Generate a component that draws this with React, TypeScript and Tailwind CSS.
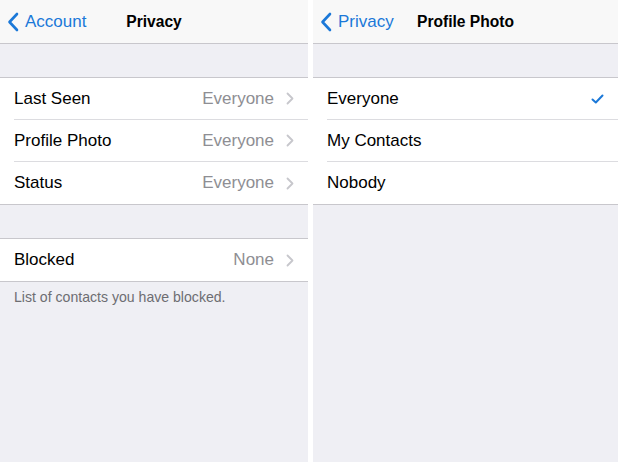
import { ReactNode } from "react";

const BackChevron = () => (
  <svg width="12" height="20" viewBox="0 0 12 20" className="shrink-0">
    <path d="M10 2 L2.5 10 L10 18" fill="none" stroke="#1b78d8" strokeWidth="2.6" strokeLinecap="round" strokeLinejoin="round" />
  </svg>
);

const RowChevron = () => (
  <svg width="8" height="13" viewBox="0 0 8 13" className="shrink-0">
    <path d="M1.5 1.5 L6.5 6.5 L1.5 11.5" fill="none" stroke="#c7c7cc" strokeWidth="1.8" strokeLinecap="round" strokeLinejoin="round" />
  </svg>
);

const Check = () => (
  <svg width="13" height="10" viewBox="0 0 13 10">
    <path d="M1.5 5.5 L4.8 8.5 L11.5 1.5" fill="none" stroke="#1b78d8" strokeWidth="2" strokeLinecap="round" strokeLinejoin="round" />
  </svg>
);

function NavBar({ back, title }: { back: string; title: string }) {
  return (
    <div className="relative h-[44px] bg-[#f8f8f8] border-b border-[#c8c7cc] flex items-center">
      <div className="flex items-center gap-[6px] pl-[7px] pt-[1px] text-[#1b78d8] text-[17px]">
        <BackChevron />
        <span>{back}</span>
      </div>
      <div className="absolute inset-0 pt-[1px] flex items-center justify-center font-bold text-[15.6px] text-black pointer-events-none">
        {title}
      </div>
    </div>
  );
}

function Row({ label, value, last, right }: { label: string; value?: string; last?: boolean; right?: ReactNode }) {
  return (
    <div className="pl-[14px] bg-white">
      <div className={`h-[42px] flex items-center pr-[14px] ${last ? "" : "border-b border-[#dcdce0]"}`}>
        <span className="flex-1 text-[17px] text-black">{label}</span>
        {value && <span className="text-[17px] text-[#8e8e93] mr-[12px]">{value}</span>}
        {value && <RowChevron />}
        {right}
      </div>
    </div>
  );
}

function Group({ children }: { children: ReactNode }) {
  return <div className="border-y border-[#c8c7cc] bg-white">{children}</div>;
}

export default function App() {
  return (
    <div className="w-[618px] h-[462px] bg-white flex gap-[5px] overflow-hidden" style={{ fontFamily: '"Liberation Sans", Arial, sans-serif' }}>
      <div className="w-[308px] h-full bg-[#efeff4] flex flex-col">
        <NavBar back="Account" title="Privacy" />
        <div className="h-[33px]" />
        <Group>
          <Row label="Last Seen" value="Everyone" />
          <Row label="Profile Photo" value="Everyone" />
          <Row label="Status" value="Everyone" last />
        </Group>
        <div className="h-[33px]" />
        <Group>
          <Row label="Blocked" value="None" last />
        </Group>
        <p className="pl-[14px] pt-[5px] text-[14.1px] text-[#6d6d72]">List of contacts you have blocked.</p>
      </div>
      <div className="flex-1 h-full bg-[#efeff4] flex flex-col">
        <NavBar back="Privacy" title="Profile Photo" />
        <div className="h-[33px]" />
        <Group>
          <Row label="Everyone" right={<Check />} />
          <Row label="My Contacts" />
          <Row label="Nobody" last />
        </Group>
      </div>
    </div>
  );
}
